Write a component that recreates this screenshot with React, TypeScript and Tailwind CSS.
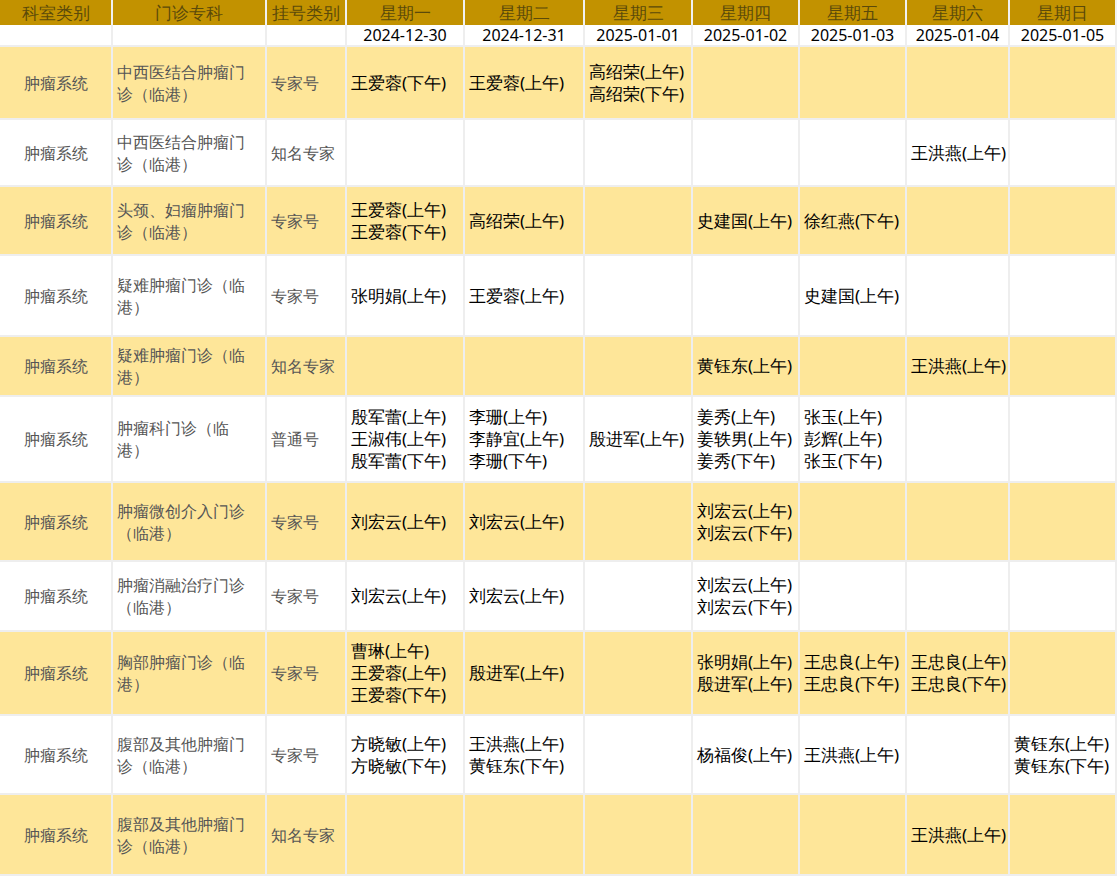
const cols = ['w-[113px]', 'w-[154px]', 'w-[80px]', 'w-[118px]', 'w-[120px]', 'w-[108px]', 'w-[107px]', 'w-[107px]', 'w-[103px]', 'w-[107px]']
const heads = ['科室类别', '门诊专科', '挂号类别', '星期一', '星期二', '星期三', '星期四', '星期五', '星期六', '星期日']
const dates = ['', '', '', '2024-12-30', '2024-12-31', '2025-01-01', '2025-01-02', '2025-01-03', '2025-01-04', '2025-01-05']

type Row = { h: string; spec: string; type: string; days: string[][] }

const rows: Row[] = [
  { h: 'h-[73px]', spec: '中西医结合肿瘤门诊（临港）', type: '专家号', days: [['王爱蓉(下午)'], ['王爱蓉(上午)'], ['高绍荣(上午)', '高绍荣(下午)'], [], [], [], []] },
  { h: 'h-[67px]', spec: '中西医结合肿瘤门诊（临港）', type: '知名专家', days: [[], [], [], [], [], ['王洪燕(上午)'], []] },
  { h: 'h-[69px]', spec: '头颈、妇瘤肿瘤门诊（临港）', type: '专家号', days: [['王爱蓉(上午)', '王爱蓉(下午)'], ['高绍荣(上午)'], [], ['史建国(上午)'], ['徐红燕(下午)'], [], []] },
  { h: 'h-[81px]', spec: '疑难肿瘤门诊（临港）', type: '专家号', days: [['张明娟(上午)'], ['王爱蓉(上午)'], [], [], ['史建国(上午)'], [], []] },
  { h: 'h-[60px]', spec: '疑难肿瘤门诊（临港）', type: '知名专家', days: [[], [], [], ['黄钰东(上午)'], [], ['王洪燕(上午)'], []] },
  { h: 'h-[86px]', spec: '肿瘤科门诊（临港）', type: '普通号', days: [['殷军蕾(上午)', '王淑伟(上午)', '殷军蕾(下午)'], ['李珊(上午)', '李静宜(上午)', '李珊(下午)'], ['殷进军(上午)'], ['姜秀(上午)', '姜轶男(上午)', '姜秀(下午)'], ['张玉(上午)', '彭辉(上午)', '张玉(下午)'], [], []] },
  { h: 'h-[79px]', spec: '肿瘤微创介入门诊（临港）', type: '专家号', days: [['刘宏云(上午)'], ['刘宏云(上午)'], [], ['刘宏云(上午)', '刘宏云(下午)'], [], [], []] },
  { h: 'h-[70px]', spec: '肿瘤消融治疗门诊（临港）', type: '专家号', days: [['刘宏云(上午)'], ['刘宏云(上午)'], [], ['刘宏云(上午)', '刘宏云(下午)'], [], [], []] },
  { h: 'h-[84px]', spec: '胸部肿瘤门诊（临港）', type: '专家号', days: [['曹琳(上午)', '王爱蓉(上午)', '王爱蓉(下午)'], ['殷进军(上午)'], [], ['张明娟(上午)', '殷进军(上午)'], ['王忠良(上午)', '王忠良(下午)'], ['王忠良(上午)', '王忠良(下午)'], []] },
  { h: 'h-[79px]', spec: '腹部及其他肿瘤门诊（临港）', type: '专家号', days: [['方晓敏(上午)', '方晓敏(下午)'], ['王洪燕(上午)', '黄钰东(下午)'], [], ['杨福俊(上午)'], ['王洪燕(上午)'], [], ['黄钰东(上午)', '黄钰东(下午)']] },
  { h: 'h-[81px]', spec: '腹部及其他肿瘤门诊（临港）', type: '知名专家', days: [[], [], [], [], [], ['王洪燕(上午)'], []] },
]

export default function App() {
  return (
    <div className="h-[876px] w-[1117px] overflow-hidden bg-white font-['Liberation_Sans','Noto_Sans_CJK_SC',sans-serif] text-[16px] leading-[22px]">
      <div className="flex h-[25px] bg-[#c29200]">
        {heads.map((h, i) => (
          <div key={i} className={`${cols[i]} flex shrink-0 items-center justify-center border-r-2 border-[#f1f1f1] text-[17px] text-[#5b4a0a]`}>
            {h}
          </div>
        ))}
      </div>
      <div className="flex h-[22px] border-b-2 border-[#eeeeee]">
        {dates.map((d, i) => (
          <div key={i} className={`${cols[i]} flex shrink-0 items-center justify-center border-r-2 border-[#eeeeee] text-[16px] text-black`}>
            {d}
          </div>
        ))}
      </div>
      {rows.map((r, ri) => (
        <div key={ri} className={`${r.h} flex border-b-2 border-[#eeeeee] ${ri % 2 === 0 ? 'bg-[#fee699]' : 'bg-white'}`}>
          <div className={`${cols[0]} flex shrink-0 items-center justify-center border-r-2 border-[#eeeeee] text-[#555]`}>肿瘤系统</div>
          <div className={`${cols[1]} flex shrink-0 items-center border-r-2 border-[#eeeeee] px-1 text-[#555]`}>
            <span className="block w-[138px] break-all">{r.spec}</span>
          </div>
          <div className={`${cols[2]} flex shrink-0 items-center border-r-2 border-[#eeeeee] px-1 text-[#555]`}>{r.type}</div>
          {r.days.map((d, di) => (
            <div key={di} className={`${cols[di + 3]} flex shrink-0 flex-col justify-center whitespace-nowrap border-r-2 border-[#eeeeee] px-1 text-[17px] text-black`}>
              {d.map((n, k) => <div key={k}>{n}</div>)}
            </div>
          ))}
        </div>
      ))}
    </div>
  )
}
